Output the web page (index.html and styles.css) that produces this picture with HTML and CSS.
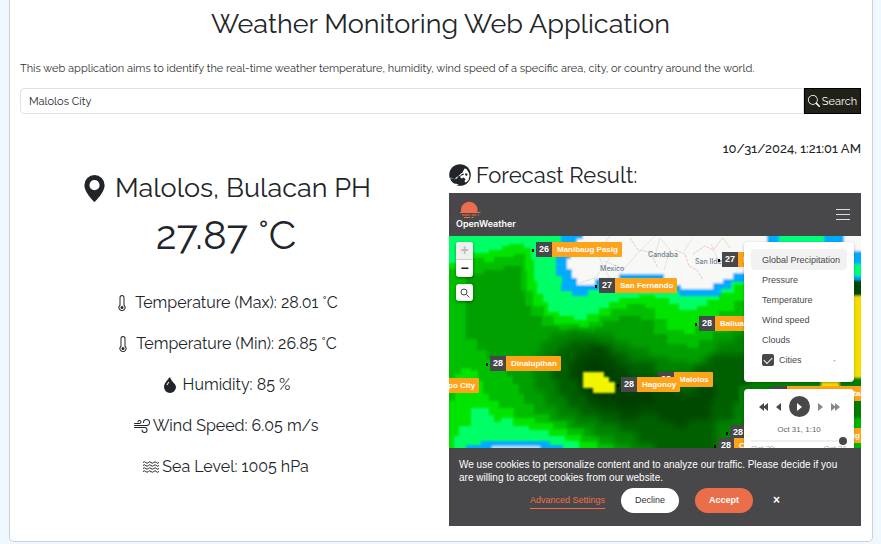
FILE: index.html
```html
<!DOCTYPE html>
<html lang="en">
<head>
<meta charset="utf-8">
<meta name="viewport" content="width=device-width, initial-scale=1">
<title>Weather Monitoring Web Application</title>
<link rel="stylesheet" href="styles.css">
</head>
<body>
<main class="card">
  <h1 class="title">Weather Monitoring Web Application</h1>
  <p class="intro">This web application aims to identify the real-time weather temperature, humidity, wind speed of a specific area, city, or country around the world.</p>
  <form class="search">
    <input class="search-input" type="text" value="Malolos City" aria-label="City">
    <button class="search-button" type="button">
      <svg class="icon-search" viewBox="0 0 16 16" aria-hidden="true"><path d="M11.742 10.344a6.5 6.5 0 1 0-1.397 1.398h-.001q.044.06.098.115l3.85 3.85a1 1 0 0 0 1.415-1.414l-3.85-3.85a1 1 0 0 0-.115-.1zM12 6.5a5.5 5.5 0 1 1-11 0 5.5 5.5 0 0 1 11 0"/></svg>
      Search
    </button>
  </form>
  <p class="clock">10/31/2024, 1:21:01 AM</p>
  <div class="columns">
    <section class="current">
      <h2 class="place">
        <svg class="icon-place" viewBox="0 0 16 16" aria-hidden="true"><path d="M8 16s6-5.686 6-10A6 6 0 0 0 2 6c0 4.314 6 10 6 10m0-7a3 3 0 1 1 0-6 3 3 0 0 1 0 6"/></svg>
        Malolos, Bulacan PH
      </h2>
      <p class="degrees">27.87 °C</p>
      <ul class="stats">
        <li class="spaced"><svg viewBox="0 0 16 16" aria-hidden="true"><path d="M8 14a1.5 1.5 0 1 0 0-3 1.5 1.5 0 0 0 0 3"/><path d="M8 0a2.500 2.500 0 0 0-2.500 2.500v7.550a3.500 3.500 0 1 0 5 0V2.500A2.500 2.500 0 0 0 8 0M6.500 2.500a1.500 1.500 0 1 1 3 0v7.987l.167.15a2.500 2.500 0 1 1-3.333 0l.166-.15z"/></svg>Temperature (Max): 28.01 °C</li>
        <li class="spaced"><svg viewBox="0 0 16 16" aria-hidden="true"><path d="M8 14a1.5 1.5 0 1 0 0-3 1.5 1.5 0 0 0 0 3"/><path d="M8 0a2.500 2.500 0 0 0-2.500 2.500v7.550a3.500 3.500 0 1 0 5 0V2.500A2.500 2.500 0 0 0 8 0M6.500 2.500a1.500 1.500 0 1 1 3 0v7.987l.167.15a2.500 2.500 0 1 1-3.333 0l.166-.15z"/></svg>Temperature (Min): 26.85 °C</li>
        <li class="spaced"><svg viewBox="0 0 16 16" aria-hidden="true"><path fill-rule="evenodd" d="M8 16a6 6 0 0 0 6-6c0-1.655-1.122-2.904-2.432-4.362C10.254 4.176 8.750 2.503 8 0c0 0-6 5.686-6 10a6 6 0 0 0 6 6M6.646 4.646l.708.708c-.29.29-1.128 1.311-1.907 2.870l-.894-.448c.82-1.641 1.717-2.753 2.093-3.130"/></svg>Humidity: 85 %</li>
        <li><svg viewBox="0 0 16 16" aria-hidden="true"><path d="M12.5 2A2.5 2.5 0 0 0 10 4.500a.5.5 0 0 1-1 0A3.500 3.500 0 1 1 12.500 8H.5a.5.5 0 0 1 0-1h12a2.500 2.500 0 0 0 0-5m-7 1a1 1 0 0 0-1 1 .5.5 0 0 1-1 0 2 2 0 1 1 2 2h-5a.5.5 0 0 1 0-1h5a1 1 0 0 0 0-2M0 9.500A.5.5 0 0 1 .5 9h10.042a3 3 0 1 1-3 3 .5.5 0 0 1 1 0 2 2 0 1 0 2-2H.5a.5.5 0 0 1-.5-.5"/></svg>Wind Speed: 6.05 m/s</li>
        <li><svg viewBox="0 0 16 16" aria-hidden="true"><path class="line" d="M0 3.500q1.300-1.500 2.700 0t2.700 0 2.600 0 2.700 0 2.600 0 2.700 0M0 6.500q1.300-1.500 2.700 0t2.700 0 2.600 0 2.700 0 2.600 0 2.700 0M0 9.500q1.300-1.500 2.700 0t2.700 0 2.600 0 2.700 0 2.600 0 2.700 0M0 12.500q1.300-1.500 2.700 0t2.700 0 2.600 0 2.700 0 2.600 0 2.700 0"/></svg>Sea Level: 1005 hPa</li>
      </ul>
    </section>

    <section class="forecast">
      <h3 class="forecast-title">
        <svg class="icon-globe" viewBox="0 0 22 22" aria-hidden="true"><circle cx="11" cy="11" r="10.800"/><path class="land" d="M15.500 4.500l2 .5 2.500 4 .5 3-1 4-2.500 2.500-1.500-1 1-2.500-2-1.500-2 1-1.500-1.500 1.500-1.500 2-.5.5-1.500-2 .5-1.500 1.500-2.500 1-1 2-2.500.5-2-.5-1.500-1-1 1 1.500 3 2.500 2 3.500.5 1 1-3 .5-3.500-1.500-3-3.500-1-3.500 2.500 1.500 2-.5 2 1.500 1.500-2 2.500-1.500 2-2 2-1.500z"/><path d="M16.500 9l2 1-.5 2-2-1z"/></svg>
        Forecast Result:
      </h3>
      <div class="widget">
        <header class="widget-header">
          <a class="brand" href="#">
            <svg class="brand-sun" viewBox="0 0 22 18" aria-hidden="true"><path d="M2.500 12a8.300 8.300 0 1 1 15.500 0z"/><path class="ray" d="M1 11.500h14M17.500 11.500h4M3 14h8M12.500 14h5M19 14h1M5 16.500h6M12.500 16.500h2"/></svg>
            <span>OpenWeather</span>
          </a>
          <button class="menu" type="button" aria-label="Menu"><i></i><i></i><i></i></button>
        </header>

        <div class="map">
          <svg class="map-tiles" viewBox="0 0 412 212" preserveAspectRatio="xMinYMin slice" aria-hidden="true">
            <defs>
              <filter id="soft" x="-5%" y="-5%" width="110%" height="110%"><feGaussianBlur stdDeviation="1"/></filter>
              <filter id="softer" x="-5%" y="-5%" width="110%" height="110%"><feGaussianBlur stdDeviation="3"/></filter>
            </defs>
            <rect width="412" height="212" fill="#00ff66"/>
            <g filter="url(#soft)">
              <path fill="#00e400" d="M-5 27H14V22H20V17H40V14H53V10H60V8H75V12H82V24H85V45H88V58H94V66H99V76H110V80H125V84H138V78H150V72H160V66H170V62H190V59H206V62H220V68H230V74H248V70H258V64H270V57H285V48H420V220H130V205H116V200H100V194H80V190H64V182H52V186H45V179H40V172H22V190H10V200H5V220H-5Z"/>
              <path fill="#00be00" d="M-5 33H15V27H23V22H35V26H45V21H65V18H76V35H78V55H84V70H95V80H105V88H130V92H140V86H150V80H162V73H178V68H196V72H206V83H218V94H235V98H246V90H258V84H270V75H285V65H420V220H148V206H132V199H118V193H104V187H86V182H65V172H50V165H40V158H34V145H29V135H22V132H12V138H6V165H0V200H-5Z"/>
              <path fill="#00a000" d="M17 38H35V34H55V30H72V55H76V70H82V80H93V90H110V94H130V98H146V91H154V85H170V80H192V84H205V98H218V108H238V112H250V104H264V96H280V88H420V220H165V208H150V200H135V192H118V185H100V178H85V168H75V158H70V148H64V140H58V132H48V123H38V114H28V103H17Z"/>
            </g>
            <g filter="url(#softer)">
              <path fill="#008200" d="M84 118H92V106H102V98H120V94H145V97H165V105H180V112H200V120H220V125H240V128H252V120H267V106H285V98H420V220H182V208H165V200H145V190H125V182H108V170H96V155H86V140H84Z"/>
              <path fill="#006000" d="M102 118H110V110H120V104H150V108H165V116H180V125H206V137H235V142H244V128H260V118H300V168H285V185H267V220H205V208H188V196H170V188H150V181H130V172H118V160H108V145H102Z"/>
              <path fill="#004a00" d="M120 124H128V115H140V109H158V120H168V130H180V140H206V152H230V158H248V146H267V165H262V184H240V192H225V186H210V178H190V184H170V176H150V170H138V158H128V145H120Z"/>
              <path fill="#003c00" d="M130 130H137V122H156V132H166V144H176V156H206V168H188V174H170V166H150V160H137V148H130Z"/>
            </g>
            <g filter="url(#soft)">
              <path fill="#f2f500" d="M134 136H155V141H160V146H166V157H144V152H134Z"/>
              <path fill="#00aaff" d="M17 220V209H32V205H101V209H114V220Z"/>
              <path fill="#aee0fa" d="M43 220V210H91V220Z"/>
              <path fill="#00aaff" d="M112-5V12H107V40H113V49H112V55H123V60H139V54H150V49H185V51H210V55H230V60H272V53H282V46H420V-5Z"/>
              <path fill="#00ff78" d="M330-5H375V7H330Z"/>
              <path fill="#f8f8f6" d="M134-5V3H128V14H122V23H118V33H123V42H128V49H146V43H170V38H215V43H223V49H232V53H264V47H274V43H284V37H296V18H318V-5Z"/>
              <path fill="#f8f8f6" d="M395-5H420V15H395Z"/>
              <path fill="#00ff78" d="M395 28H420V40H395Z"/>
              <path fill="#004a00" d="M395 44H420V60H395Z"/>
              <path fill="#f5dd00" d="M393 60H420V142H393ZM372 145H390V152H372Z"/>
              <path fill="#007d00" d="M290 150H372V154H390V145H420V220H290Z"/>
              <path fill="#00b400" d="M397 182H420V220H397Z"/>
            </g>
            <g class="roads"><path d="M136 5l12 12 14 28M140 20l14-10 8-12M155 25l20 8 14-16 17-17M128 48l18-6 15-20M206 20l5-18 10 12-6 20M235 15l8-12M262 8l8 18 12-8 10 15"/></g>
            <g class="borders"><path d="M181 2l8 12 12 2 8 16M226 14l10 4 4 12 8 4 6 10M244 18l12-8 8 4 10-12 7 10"/></g>
          </svg>

          <span class="town town-mexico">Mexico</span>
          <span class="town town-candaba">Candaba</span>
          <span class="town town-ildefonso">San Ildefonso</span>

          <div class="city city-manibaug"><b>26</b><span>Manibaug Pasig</span></div>
          <div class="city city-fernando"><b>27</b><span>San Fernando</span></div>
          <div class="city city-miguel"><b>27</b><span>San Miguel</span></div>
          <div class="city city-baliuag"><b>28</b><span>Baliuag</span></div>
          <div class="city city-dinalupihan"><b>28</b><span>Dinalupihan</span></div>
          <div class="city city-olongapo"><span>po City</span></div>
          <div class="city city-malolos"><b>28</b><span>Malolos</span></div>
          <div class="city city-hagonoy"><b>28</b><span>Hagonoy</span></div>
          <div class="city city-obando"><b>28</b><span>City</span></div>
          <div class="city city-south"><b>28</b><span>Caloocan</span></div>
          <div class="city city-montalban"><b>28</b><span>Montalban</span></div>
          <div class="city city-rodriguez"><span>rig</span></div>

          <div class="map-tools">
            <div class="zoom">
              <button type="button" disabled aria-label="Zoom in">+</button>
              <button type="button" aria-label="Zoom out">−</button>
            </div>
            <button class="find" type="button" aria-label="Find a place"><svg viewBox="0 0 12 12" aria-hidden="true"><circle cx="5" cy="5" r="3"/><path d="M7.500 7.500l3 3"/></svg></button>
          </div>

          <div class="map-panels">
            <div class="layers">
              <button class="active" type="button">Global Precipitation</button>
              <button type="button">Pressure</button>
              <button type="button">Temperature</button>
              <button type="button">Wind speed</button>
              <button type="button">Clouds</button>
              <label class="check"><input type="checkbox" checked><span>Cities</span><svg viewBox="0 0 4 4" aria-hidden="true"><path d="M0 3l2-2 2 2z"/></svg></label>
            </div>
            <div class="player">
              <div class="player-buttons">
                <button type="button" aria-label="First"><svg viewBox="0 0 10 8"><path d="M5 0v8L0 4zM9 0v8L4 4z"/></svg></button>
                <button type="button" aria-label="Back"><svg viewBox="0 0 10 8"><path d="M7 0v8L2 4z"/></svg></button>
                <button class="play" type="button" aria-label="Play"><svg viewBox="0 0 10 8"><path d="M3 0v8l5-4z"/></svg></button>
                <button class="faded" type="button" aria-label="Forward"><svg viewBox="0 0 10 8"><path d="M3 0v8l5-4z"/></svg></button>
                <button class="faded" type="button" aria-label="Last"><svg viewBox="0 0 10 8"><path d="M1 0v8l5-4zM5 0v8l5-4z"/></svg></button>
              </div>
              <p class="player-time">Oct 31, 1:10</p>
              <input class="timeline" type="range" min="0" max="100" value="100" aria-label="Time">
              <div class="player-range"><span>Oct 30</span><span>Oct 31</span></div>
            </div>
          </div>
        </div>

        <div class="cookies">
          <p>We use cookies to personalize content and to analyze our traffic. Please decide if you are willing to accept cookies from our website.</p>
          <div class="cookie-actions">
            <a href="#">Advanced Settings</a>
            <button class="decline" type="button">Decline</button>
            <button class="accept" type="button">Accept</button>
            <button class="close" type="button" aria-label="Close">×</button>
          </div>
        </div>
      </div>
    </section>
  </div>
</main>
</body>
</html>
```
FILE: styles.css
```css
* { box-sizing: border-box; }

body {
  margin: 0;
  background: #f0f8ff;
  color: #212529;
  font-family: Raleway, Lato, sans-serif;
}

h1, h2, h3, p, ul { margin: 0; padding: 0; font-weight: 400; }
button { margin: 0; padding: 0; border: 0; font: inherit; color: inherit; background: none; }
svg { fill: currentColor; flex: none; display: block; }

.card {
  margin: 0 8px 2px 9px;
  padding: 6px 11px 15px 10px;
  background: #fff;
  border: 1px solid #ced0d4;
  border-top: 0;
  border-radius: 0 0 5px 5px;
}

.title { font-size: 27px; line-height: 36px; text-align: center; }
.intro { margin-top: 17px; font-size: 11px; line-height: 20px; color: #333; }

.search { display: flex; margin-top: 9px; height: 26px; }
.search-input {
  flex: 1;
  min-width: 0;
  padding: 0 8px;
  border: 1px solid #dee2e6;
  border-radius: 4px 0 0 4px;
  font: inherit;
  font-size: 11px;
  color: #212529;
}
.search-button {
  display: flex;
  align-items: center;
  justify-content: center;
  gap: 2px;
  width: 57px;
  border: 1px solid #000;
  background: #212118;
  color: #fff;
  font-size: 11px;
}
.icon-search { width: 12px; height: 12px; }

.clock { margin-top: 25px; font-size: 13px; font-weight: 500; line-height: 20px; text-align: right; }

.columns { display: grid; grid-template-columns: 1fr 1fr; gap: 17px; }

.current { padding-top: 11px; text-align: center; }
.place { display: flex; align-items: center; justify-content: center; gap: 7px; font-size: 27px; line-height: 36px; }
.icon-place { width: 27px; height: 27px; }
.degrees { margin-top: 5px; font-size: 40px; line-height: 48px; }
.stats { display: flex; flex-direction: column; gap: 17px; margin-top: 32px; list-style: none; }
.stats li { display: flex; align-items: center; justify-content: center; gap: 3px; font-size: 16px; line-height: 24px; }
.stats .spaced { gap: 5px; }
.stats svg { width: 16px; height: 16px; }
.line { fill: none; stroke: currentColor; stroke-width: 1; }

.forecast-title { display: flex; align-items: center; gap: 5px; padding: 3px 0 5px; font-size: 22px; line-height: 26px; }
.icon-globe { width: 22px; height: 22px; }
.land { fill: #fff; }

.widget { background: #48484a; color: #fff; font-family: "Liberation Sans", Arial, sans-serif; }
.widget-header { display: flex; justify-content: space-between; align-items: center; height: 43px; padding: 0 11px 0 7px; }
.brand { display: block; color: #fff; text-decoration: none; font: 600 9px/10px Inter, sans-serif; }
.brand-sun { width: 22px; height: 18px; margin-left: 3px; color: #ec6e4c; }
.ray { stroke: currentColor; stroke-width: 1; fill: none; }
.menu { display: grid; gap: 4px; width: 14px; }
.menu i { height: 1px; background: #ddd; }

.map { position: relative; height: 212px; overflow: hidden; }
.map-tiles { width: 100%; height: 100%; }
.roads { fill: none; stroke: #e2e2e2; stroke-width: 1; }
.borders { fill: none; stroke: #edc8c8; stroke-width: 1; stroke-dasharray: 3 1; }

.town { position: absolute; color: #6f8290; font: 500 7px/9px Inter, sans-serif; white-space: nowrap; }
.town-mexico { left: 151px; top: 28px; }
.town-candaba { left: 199px; top: 14px; }
.town-ildefonso { left: 246px; top: 21px; }

.city { position: absolute; display: flex; color: #fff; font-size: 8px; font-weight: 700; line-height: 15px; white-space: nowrap; }
.city b { width: 16px; background: #48484a; font-size: 9px; text-align: center; }
.city b::before { content: ""; position: absolute; left: -4px; top: 7px; width: 2px; height: 3px; background: #000; }
.city span { padding: 0 4px 0 5px; background: #ffa31a; border-radius: 0 1px 1px 0; }
.city-manibaug { left: 87px; top: 6px; }
.city-fernando { left: 150px; top: 42px; }
.city-miguel { left: 273px; top: 16px; }
.city-baliuag { left: 250px; top: 80px; }
.city-dinalupihan { left: 41px; top: 120px; }
.city-olongapo { left: -6px; top: 142px; }
.city-malolos { left: 209px; top: 136px; }
.city-hagonoy { left: 172px; top: 141px; }
.city-obando { left: 281px; top: 189px; }
.city-south { left: 269px; top: 202px; }
.city-montalban { left: 322px; top: 150px; }
.city-montalban span { width: 90px; text-align: right; padding: 0; }
.city-rodriguez { right: -3px; top: 192px; }

.map-tools { position: absolute; left: 7px; top: 6px; width: 17px; color: #222; }
.zoom, .find { border-radius: 3px; background: #fff; box-shadow: 0 1px 3px #0007; overflow: hidden; }
.zoom button { display: block; width: 100%; height: 17px; font-size: 14px; font-weight: 700; line-height: 17px; }
.zoom button:first-child { height: 18px; background: #f0f0f0; color: #bbb; border-bottom: 1px solid #ccc; }
.find { display: grid; place-items: center; width: 17px; height: 17px; margin-top: 7px; }
.find svg { width: 12px; height: 12px; fill: none; stroke: #444; }

.map-panels { position: absolute; right: 7px; top: 6px; width: 110px; color: #48484a; font-size: 9px; }
.layers, .player { padding: 7px; background: #fff; border-radius: 4px; box-shadow: 0 1px 3px #0004; }
.layers { height: 140px; }
.layers button, .check { display: flex; align-items: center; width: 100%; height: 20px; padding: 0 11px; border-radius: 4px; white-space: nowrap; }
.layers .active { background: #f2f2f2; height: 21px; }
.check input { appearance: none; display: grid; place-items: center; width: 12px; height: 12px; margin: 0 5px 0 0; border-radius: 2px; background: #48484a; }
.check input::after { content: ""; width: 7px; height: 4px; margin-bottom: 2px; border: solid #fff; border-width: 0 0 1px 1px; transform: rotate(-45deg); }
.check svg { width: 3px; height: 3px; margin-left: auto; color: #aaa; }

.player { height: 90px; margin-top: 7px; }
.player-buttons { display: flex; align-items: center; justify-content: center; gap: 5px; height: 21px; }
.player-buttons svg { width: 10px; height: 8px; }
.player-buttons .play { display: grid; place-items: center; width: 21px; height: 21px; border-radius: 50%; background: #48484a; color: #fff; }
.player-buttons .faded { color: #888; }
.player-time { margin-top: 8px; font-size: 8px; line-height: 10px; text-align: center; color: #666; }
.timeline { appearance: none; display: block; width: 100%; height: 2px; margin: 5px 0 0; background: #eee; }
.timeline::-webkit-slider-thumb { appearance: none; width: 8px; height: 8px; border-radius: 50%; background: #48484a; }
.player-range { display: flex; justify-content: space-between; margin-top: 2px; color: #aaa; font-size: 8px; line-height: 10px; }

.cookies { padding: 10px; font-size: 10px; line-height: 13px; }
.cookie-actions { display: flex; align-items: center; justify-content: center; gap: 16px; height: 25px; margin: 4px 0 3px; }
.cookie-actions a { color: #ec6e4c; text-decoration: none; border-bottom: 1px solid #ec6e4c; font-size: 9px; line-height: 16px; }
.decline, .accept { width: 58px; height: 25px; border-radius: 13px; font-size: 9px; }
.decline { background: #fff; color: #333; }
.accept { background: #eb6e4b; font-weight: 700; }
.close { padding-left: 4px; font-size: 12px; font-weight: 700; }
```
